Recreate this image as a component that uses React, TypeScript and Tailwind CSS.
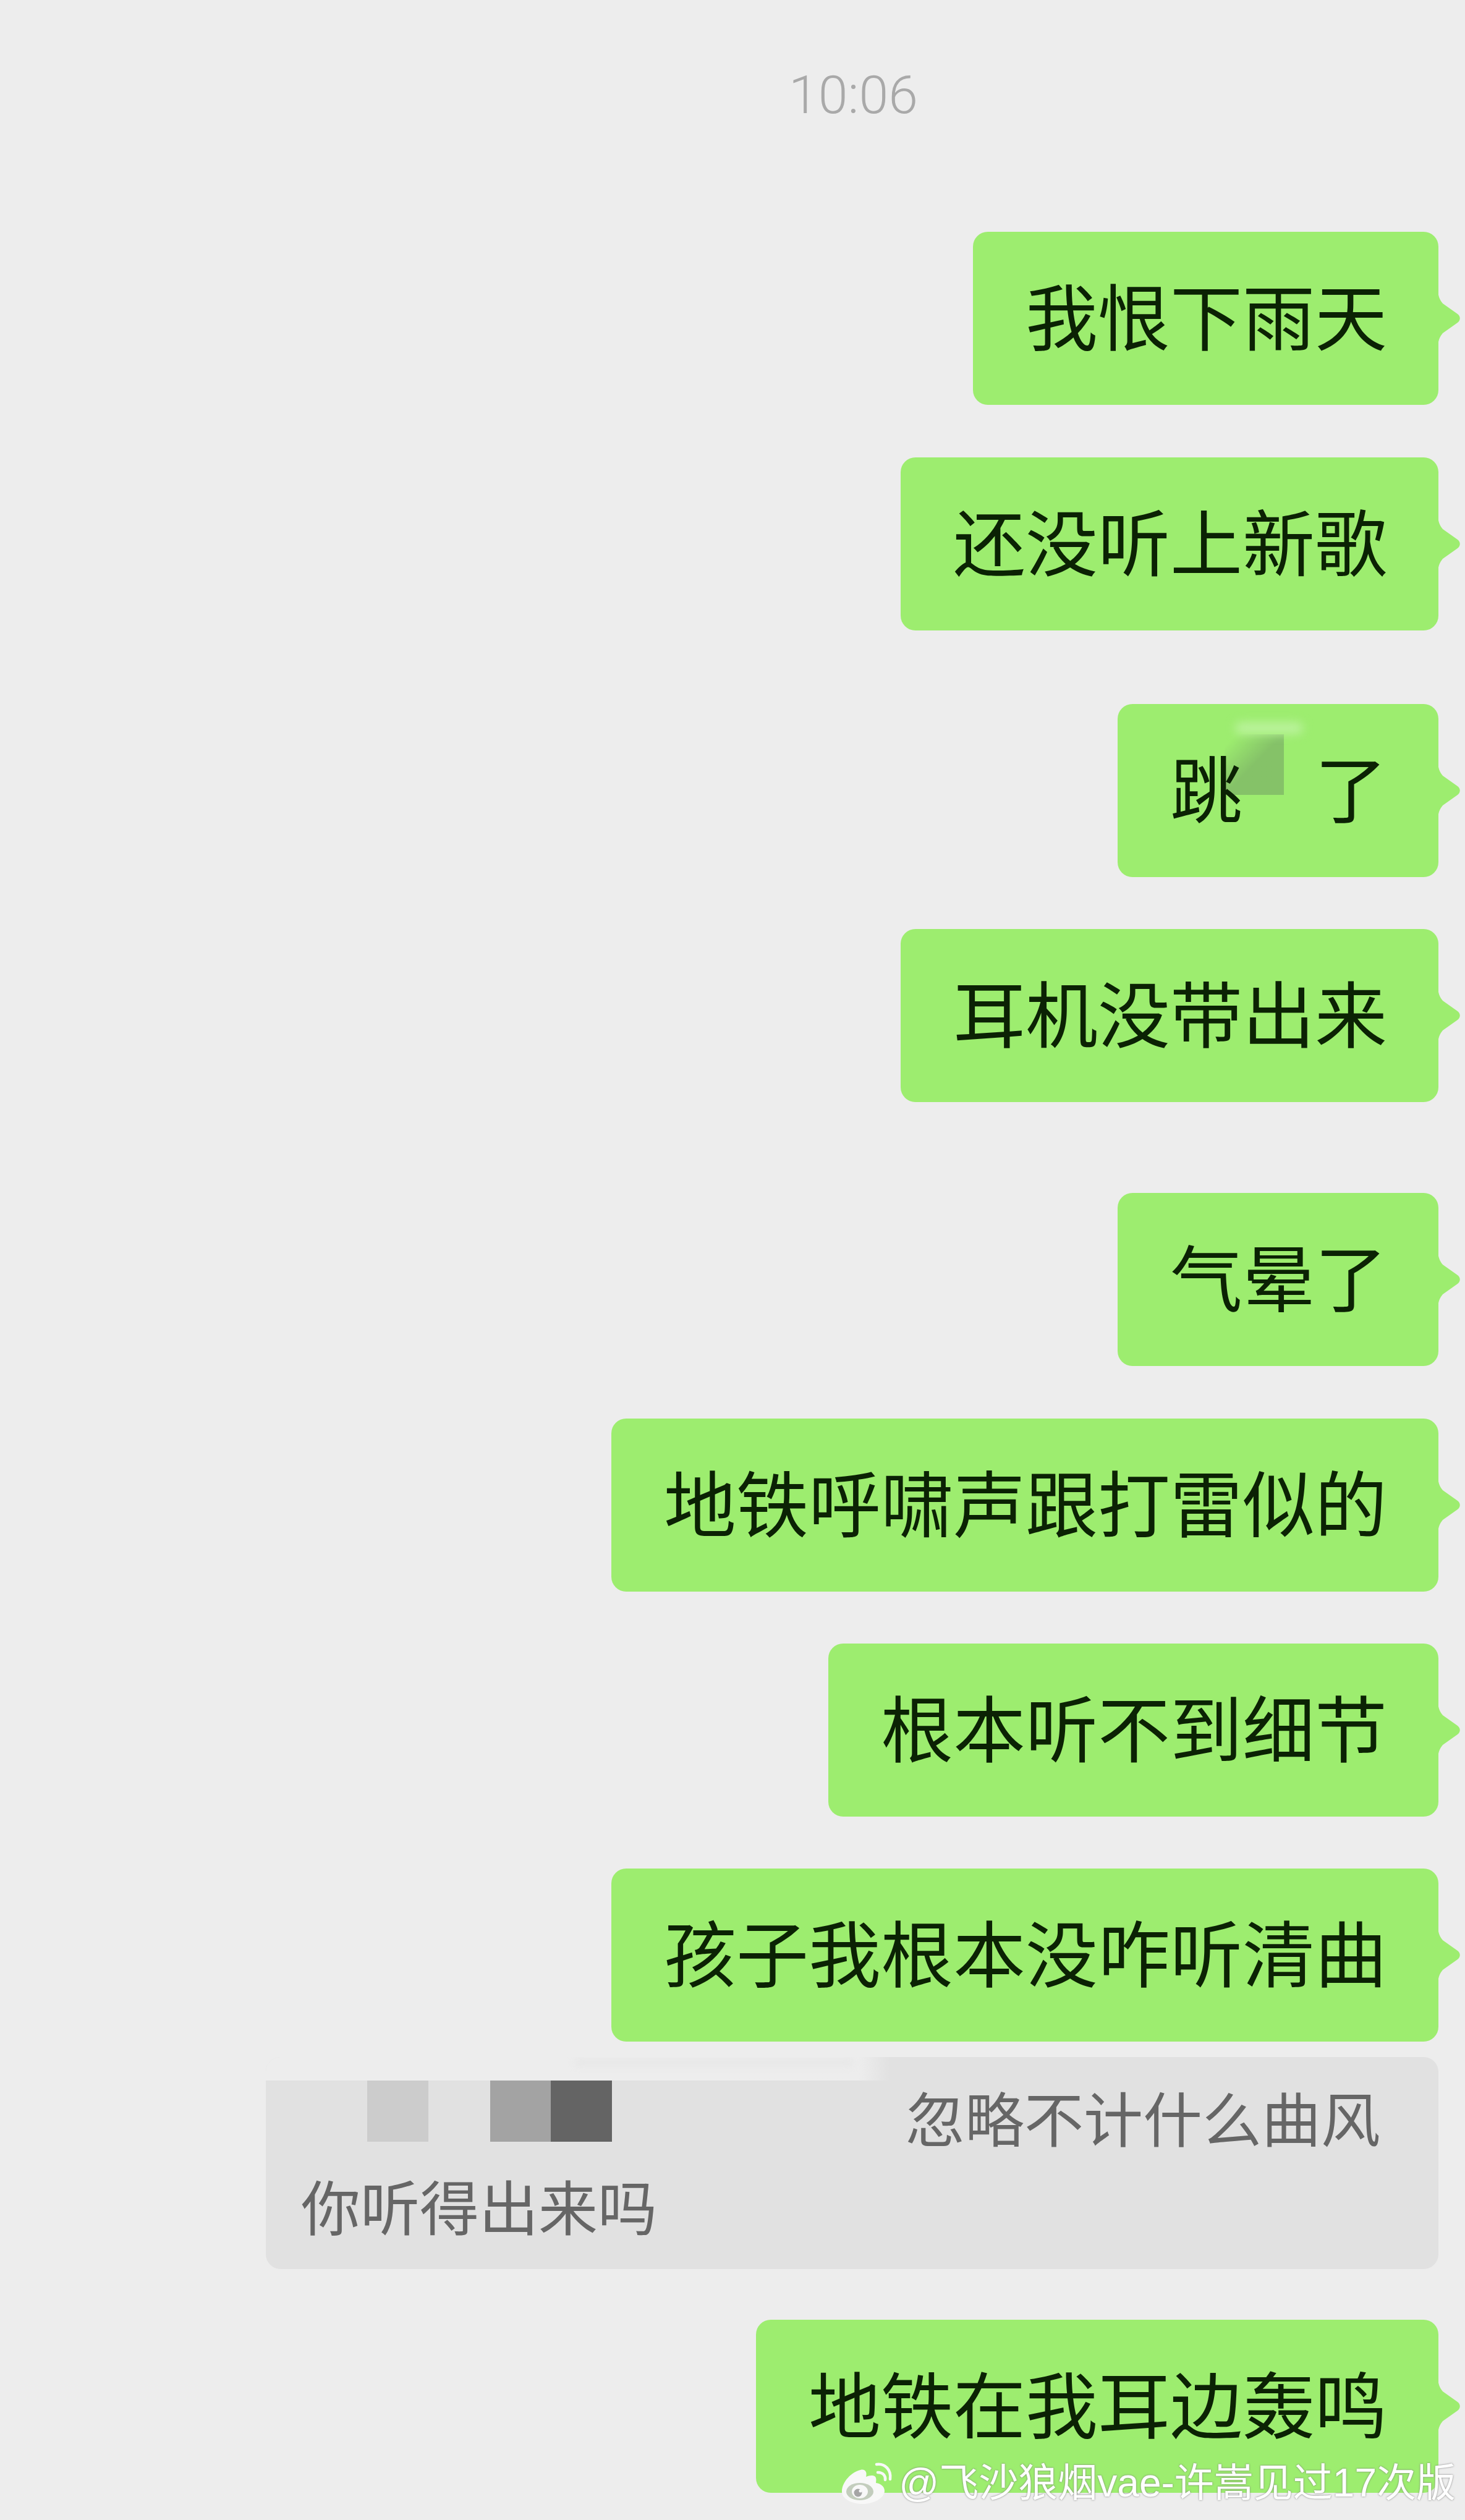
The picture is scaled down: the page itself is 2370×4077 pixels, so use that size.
import React from 'react';

const Tail = () => (
  <svg className="absolute left-full top-1/2 -translate-y-1/2 -ml-px" width="37" height="84" viewBox="0 0 37 84" fill="#9ded6f">
    <path d="M0 0 C2 8 3 12 8 18 L32 35 C37 39 37 45 32 49 L8 66 C3 72 2 76 0 84 Z" />
  </svg>
);

const Bubble = ({ className = '', children }: { className?: string; children: React.ReactNode }) => (
  <div className={`relative flex h-[280px] items-center rounded-[24px] bg-[#9ded6f] pb-[16px] pl-[85px] pr-[83px] text-[117px] leading-none text-[#0b2204] ${className}`}>
    {children}
    <Tail />
  </div>
);

const WeiboLogo = () => (
  <svg width="82" height="69" viewBox="0 0 82 69" className="shrink-0">
    <path d="M0 48 C0 32 16 16 30 13 C38 11 41 17 39 24 C46 21 54 21 55 26 C56 29 55 32 55 34 C62 35 69 39 69 47 C69 58 52 68 34 68 C16 68 0 60 0 48 Z" fill="#f8f8f8" />
    <ellipse cx="29" cy="48" rx="22" ry="14" fill="#c3cdbd" />
    <ellipse cx="29" cy="48" rx="13" ry="11" fill="#f8f8f8" />
    <circle cx="26" cy="50" r="6.5" fill="#a5a5a5" />
    <circle cx="30" cy="47" r="2.5" fill="#f8f8f8" />
    <path d="M58 17 C67 17 71 23 70 29" fill="none" stroke="#f8f8f8" strokeWidth="4.5" strokeLinecap="round" />
    <path d="M56 4 C70 2 80 13 78 28" fill="none" stroke="#f8f8f8" strokeWidth="4.5" strokeLinecap="round" />
  </svg>
);

export default function App() {
  return (
    <div className="relative h-[4077px] w-[2370px] overflow-hidden bg-[#ededed] font-['Noto_Sans_CJK_SC',sans-serif]">
      <div className="pl-[1276px] pt-[110px] font-['Roboto',sans-serif] text-[86px] font-light leading-[88px] text-[#a9a9a9]">
        10:06
      </div>

      <div className="mt-[177px] flex flex-col items-end pr-[43px]">
        <Bubble>我恨下雨天</Bubble>
        <Bubble className="mt-[85px]">还没听上新歌</Bubble>
        <Bubble className="mt-[119px]">
          <div className="absolute left-[173px] top-[49px] h-[98px] w-[96px] bg-gradient-to-br from-[#9ded6f] from-10% to-[#85c268] to-50%" />
          <div className="absolute left-[190px] top-[30px] h-[18px] w-[110px] rounded-full bg-[#bdf3a0] blur-[8px]" />
          <span className="relative">跳</span>
          <span className="relative w-[117px]" />
          <span className="relative">了</span>
        </Bubble>
        <Bubble className="mt-[84px]">耳机没带出来</Bubble>
        <Bubble className="mt-[147px]">气晕了</Bubble>
        <Bubble className="mt-[85px]">地铁呼啸声跟打雷似的</Bubble>
        <Bubble className="mt-[84px]">根本听不到细节</Bubble>
        <Bubble className="mt-[84px]">孩子我根本没咋听清曲</Bubble>

        <div className="relative mt-[25px] h-[343px] w-[1897px] overflow-hidden rounded-[24px] bg-[#e1e1e1] pl-[57px] pr-[94px] pt-[24px] text-[96px] leading-[143px] text-[#666666]">
          <div className="absolute left-0 top-0 h-[38px] w-[1010px] bg-gradient-to-r from-[#ededed] from-95% to-[#e1e1e1]" />
          <div className="absolute left-[500px] top-[4px] h-[10px] w-[450px] rounded-full bg-[#e6e6e6] blur-[6px]" />
          <div className="absolute left-[164px] top-[38px] flex h-[99px]">
            <div className="w-[99px] bg-[#cccccc]" />
            <div className="w-[100px]" />
            <div className="w-[98px] bg-[#a3a3a3]" />
            <div className="w-[99px] bg-[#646464]" />
          </div>
          <div className="text-right">忽略不计什么曲风</div>
          <div>你听得出来吗</div>
        </div>

        <Bubble className="mt-[82px]">地铁在我耳边轰鸣</Bubble>
      </div>

      <div className="absolute bottom-[22px] right-[15px] flex items-center gap-[10px] font-['Liberation_Sans','Noto_Sans_CJK_SC',sans-serif] text-[64px] leading-[76px] text-white [text-shadow:0_0_3px_#7a7a7a]">
        <WeiboLogo />
        <span>@飞沙狼烟vae-许嵩见过17次版</span>
      </div>
    </div>
  );
}
